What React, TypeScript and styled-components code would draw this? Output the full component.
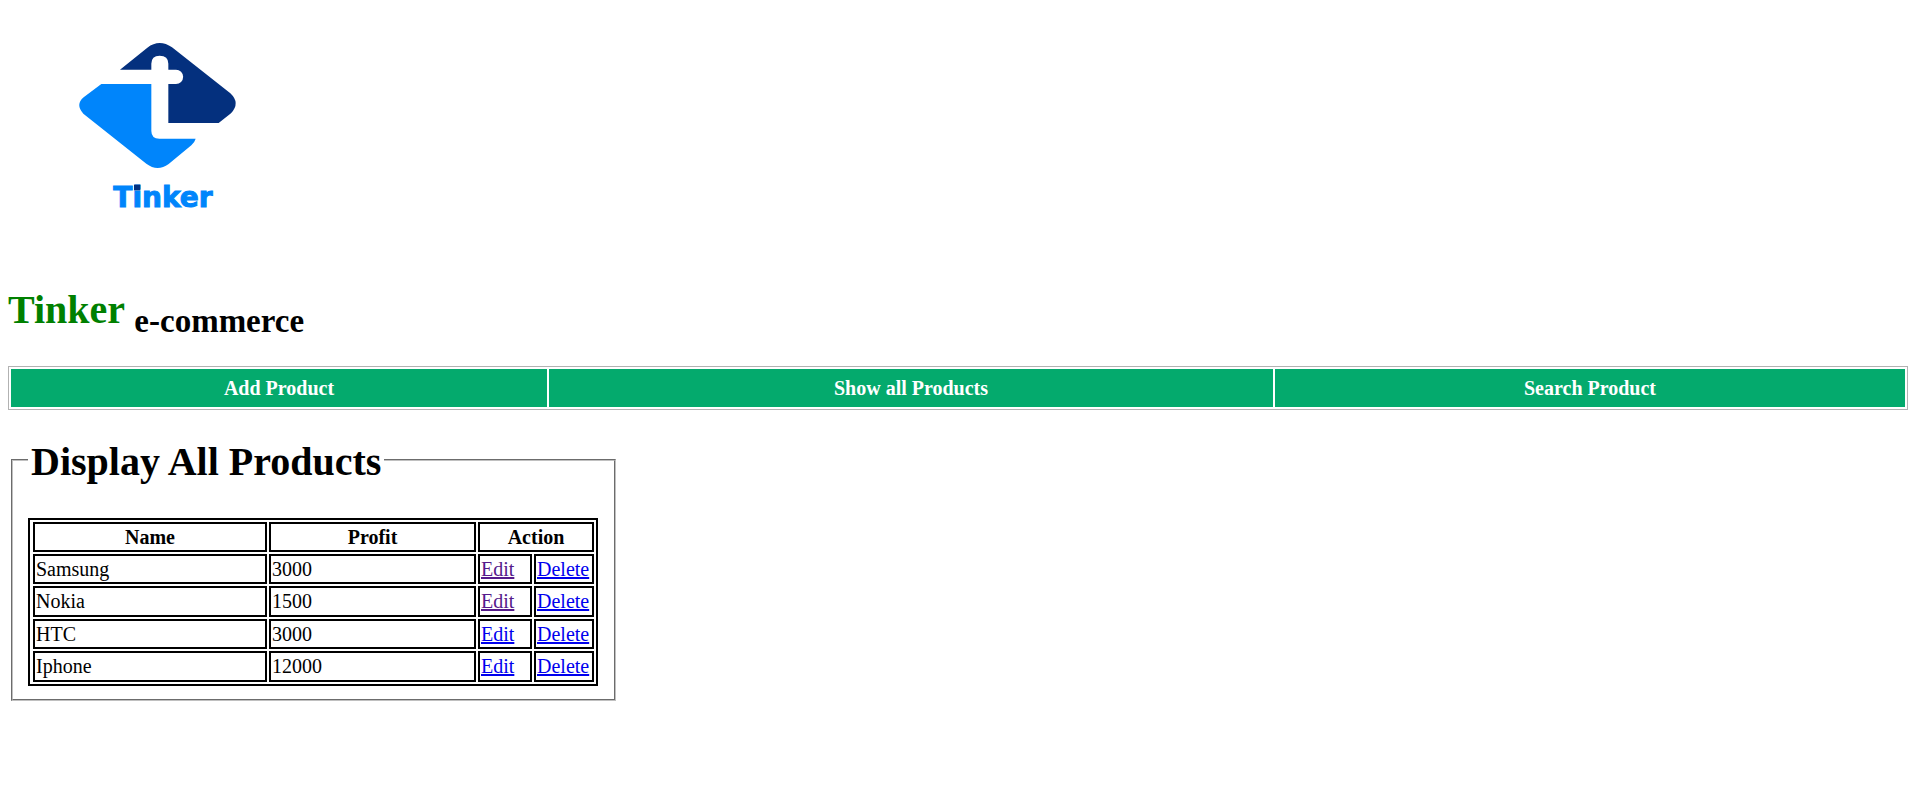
import React from 'react';
import styled, { createGlobalStyle } from 'styled-components';

const GlobalStyle = createGlobalStyle`
  body {
    margin: 0;
    padding: 30px 4px 20px 8px;
    background: #fff;
    color: #000;
    font: 20px/23px "Liberation Serif", "Times New Roman", serif;
  }
`;

const Logo = styled.svg`
  display: block;
  width: 200px;
  height: 190px;
  margin-left: 52px;
`;

const LogoText = styled.text`
  font: bold 84px "DejaVu Sans", sans-serif;
  fill: #0085fb;
  stroke: #0085fb;
  stroke-width: 3px;
`;

const SiteTitle = styled.h1`
  margin: 67px 0 26px;
  font-size: 40px;
  line-height: 46px;
`;

const Brand = styled.span`
  color: #008000;
`;

const Tagline = styled.sub`
  font-size: 33px;
  line-height: 38px;
`;

const Menu = styled.nav`
  display: grid;
  grid-template-columns: 536fr 724fr 630fr;
  gap: 2px;
  padding: 2px;
  border: 1px solid #b2b2b2;
`;

const MenuLink = styled.a`
  padding: 8px 0 7px;
  background: #04aa6d;
  color: #fff;
  font-weight: bold;
  text-align: center;
  text-decoration: none;
`;

const Panel = styled.fieldset`
  width: fit-content;
  margin: 25px 3px 0;
  padding: 33px 16px 13px 15px;
  border: 2px groove #c0c0c0;
`;

const PanelTitle = styled.legend`
  padding: 4px 3px 0;
  font-size: 40px;
  font-weight: bold;
  line-height: 46px;
`;

const ProductTable = styled.table`
  table-layout: fixed;
  width: 570px;
  padding-left: 1px;
  border: 2px solid #000;
  border-spacing: 2px;
`;

const Column = styled.col<{ $width: number }>`
  width: ${(p) => p.$width}px;
`;

const Row = styled.tr`
  height: 31px;
  &:nth-child(odd) {
    height: 30px;
  }
  thead & {
    height: 31px;
  }
`;

const HeadCell = styled.th`
  box-sizing: border-box;
  padding: 1px;
  border: 2px solid #000;
`;

const Cell = styled.td`
  box-sizing: border-box;
  padding: 1px;
  border: 2px solid #000;
`;

const ActionLink = styled.a<{ $visited?: boolean }>`
  color: ${(p) => (p.$visited ? '#551a8b' : '#0000ee')};
`;

const products = [
  { name: 'Samsung', profit: 3000, edited: true },
  { name: 'Nokia', profit: 1500, edited: true },
  { name: 'HTC', profit: 3000, edited: false },
  { name: 'Iphone', profit: 12000, edited: false },
];

export default function App() {
  return (
    <>
      <GlobalStyle />
      <header>
        <Logo viewBox="0 0 600 570" role="img" aria-label="Tinker logo">
          <path
            fill="#04307e"
            d="M180 119 L262 53 Q298 26 336 52 L511 190 Q542 219 513 250 L476 279 H325 V162 H348 A21 21 0 0 0 348 119 H325 V101 Q325 77 299 77 Q274 77 274 101 V119 Z"
          />
          <path
            fill="#0085fb"
            d="M124 162 H274 V303 Q274 326 298 326 H407 Q404 337 394 346 L326 402 Q292 426 259 401 L70 251 Q45 224 71 202 Z"
          />
          <LogoText x="160" y="531">Tinker</LogoText>
          <path fill="#04307e" d="M222 464 H241 V481 H222 Z" />
        </Logo>
        <SiteTitle>
          <Brand>Tinker</Brand> <Tagline>e-commerce</Tagline>
        </SiteTitle>
      </header>
      <Menu>
        <MenuLink href="#add">Add Product</MenuLink>
        <MenuLink href="#all">Show all Products</MenuLink>
        <MenuLink href="#search">Search Product</MenuLink>
      </Menu>
      <main>
        <Panel>
          <PanelTitle>Display All Products</PanelTitle>
          <ProductTable>
            <colgroup>
              <Column $width={234} />
              <Column $width={207} />
              <Column $width={54} />
              <Column $width={60} />
            </colgroup>
            <thead>
              <Row>
                <HeadCell scope="col">Name</HeadCell>
                <HeadCell scope="col">Profit</HeadCell>
                <HeadCell scope="colgroup" colSpan={2}>Action</HeadCell>
              </Row>
            </thead>
            <tbody>
              {products.map((p) => (
                <Row key={p.name}>
                  <Cell>{p.name}</Cell>
                  <Cell>{p.profit}</Cell>
                  <Cell><ActionLink href="#edit" $visited={p.edited}>Edit</ActionLink></Cell>
                  <Cell><ActionLink href="#delete">Delete</ActionLink></Cell>
                </Row>
              ))}
            </tbody>
          </ProductTable>
        </Panel>
      </main>
    </>
  );
}
